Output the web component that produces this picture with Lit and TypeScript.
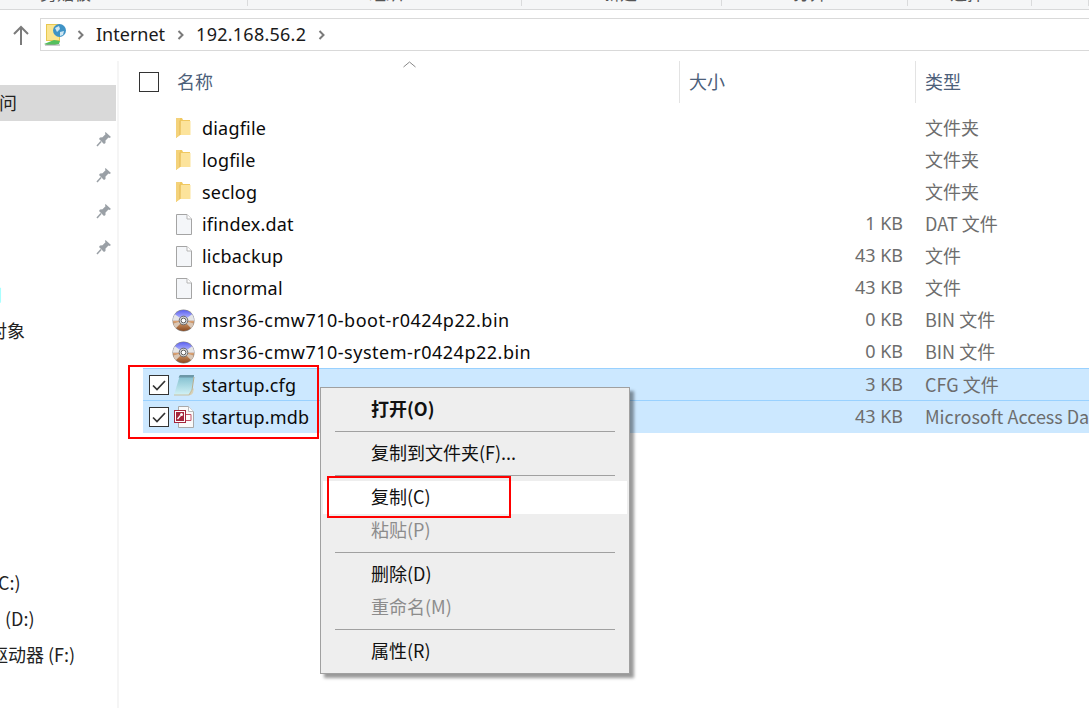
import { LitElement, html, css, svg } from "lit";
import { customElement } from "lit/decorators.js";

const folder = svg`<svg width="15" height="22" viewBox="0 0 15 22"><path d="M0 1h6l1 2h7v15H4l-4 3z" fill="#f0c860"/><path d="M0 1h4v17l-4 3z" fill="#f4d27a"/><path d="M4.500 4H14.500V18H4z" fill="#fce39b"/><path d="M4 3.500V18" stroke="#e4b850" fill="none"/></svg>`;
const doc = svg`<svg width="18" height="23" viewBox="0 0 18 23"><path d="M1.500 1.500h10.500l4.500 4.500v15.500h-15z" fill="#f4f6f9" stroke="#a4a4a4"/><path d="M12 1.500v4.500h4.500" fill="#fff" stroke="#b5b5b5"/></svg>`;
const disc = svg`<svg width="23" height="23" viewBox="0 0 24 24"><defs><linearGradient id="d1" x1="0" y1="0" x2="0" y2="1"><stop offset="0" stop-color="#5a5ff0"/><stop offset="1" stop-color="#c8ccff"/></linearGradient><linearGradient id="d2" x1="0" y1="0" x2="0" y2="1"><stop offset="0" stop-color="#e0a878"/><stop offset="1" stop-color="#8a4a20"/></linearGradient></defs><circle cx="12" cy="12" r="11.500" fill="#8a8a8a"/><path d="M1 12a11 11 0 0 1 22 0z" fill="url(#d1)"/><path d="M1 12a11 11 0 0 0 22 0z" fill="url(#d2)"/><path d="M12 12L3 5.500A11 11 0 0 0 1 12zM12 12L21 5.500A11 11 0 0 1 23 12z" fill="#e6e6e6"/><path d="M12 12L4 20A11 11 0 0 1 1.500 15zM12 12L20 20A11 11 0 0 0 22.500 15z" fill="#d9c7b6"/><circle cx="12" cy="12" r="4.500" fill="#ddd" stroke="#666"/><circle cx="12" cy="12" r="2.500" fill="#fff" stroke="#555"/></svg>`;
const cfg = svg`<svg width="22" height="22" viewBox="0 0 22 22"><defs><linearGradient id="c1" x1="0" y1="0" x2="0" y2="1"><stop offset="0" stop-color="#7dbccd"/><stop offset="1" stop-color="#d2f2f6"/></linearGradient></defs><path d="M7 1h14l-2 15-3 5H1z" fill="url(#c1)"/><path d="M7 1h14l-.5 2.500H5.500z" fill="#6d98a8"/><path d="M16 21l3-5 2-2-1 5-2 2z" fill="#d8d2b8"/><path d="M1 21h15l3-5" fill="none" stroke="#c7bfa2" stroke-width="1.200"/><path d="M21 3l-2 13" stroke="#b8ad8c"/></svg>`;
const mdb = svg`<svg width="20" height="22" viewBox="0 0 20 22"><path d="M4.500 .5h10l5 5v16h-15z" fill="#fafafa" stroke="#a9a9a9"/><path d="M14.500 .5v5h5" fill="#fff" stroke="#bbb"/><path d="M12 8.500h5v6h-5" fill="none" stroke="#c2556a"/><rect x=".5" y="4.500" width="11" height="12" fill="#fff" stroke="#a4263c"/><path d="M2 6h8v9H2z" fill="#a4263c"/><circle cx="7.500" cy="8.500" r="1.500" fill="#fff"/><path d="M6.500 9.500L3.500 13" stroke="#fff" stroke-width="1.300"/></svg>`;
const pin = svg`<svg width="16" height="16" viewBox="0 0 16 16"><path d="M9.500 1l5.500 5-1.500 1-1-.5L9.500 9.500 9.500 12 8 13 3 8l1-1.500 2.500-.2 3-3L9 2z" fill="#9aa0a6"/><path d="M5 10.500L1 15" stroke="#9aa0a6" stroke-width="1.500"/></svg>`;
const chev = svg`<svg width="8" height="10" viewBox="0 0 8 10"><path d="M1.500 1l4 4-4 4" fill="none" stroke="#7a7a7a" stroke-width="2"/></svg>`;
const netIcon = svg`<svg width="24" height="24" viewBox="0 0 24 24"><rect x="3.500" y="1.500" width="13" height="16" fill="#fbe591" stroke="#e8c850"/><path d="M1 21l10-4 6 1-1 3-4 1H4z" fill="#54c05c"/><path d="M2 22h15" stroke="#9aa0a0"/><circle cx="16.500" cy="7.500" r="6.500" fill="#3f93c6"/><path d="M12 5l4-2 1 3-3 3zM17 9l4-1-1 4-3 1z" fill="#cfe7f3"/></svg>`;
const check = svg`<svg width="14" height="14" viewBox="0 0 14 14"><path d="M1 7.500l4 4L13 3" fill="none" stroke="#333" stroke-width="1.700"/></svg>`;

type Row = { n: string; s: string; t: string; i: unknown; sel?: boolean; long?: boolean };
const rows: Row[] = [
  { n: "diagfile", s: "", t: "文件夹", i: folder },
  { n: "logfile", s: "", t: "文件夹", i: folder },
  { n: "seclog", s: "", t: "文件夹", i: folder },
  { n: "ifindex.dat", s: "1 KB", t: "DAT 文件", i: doc },
  { n: "licbackup", s: "43 KB", t: "文件", i: doc },
  { n: "licnormal", s: "43 KB", t: "文件", i: doc },
  { n: "msr36-cmw710-boot-r0424p22.bin", s: "0 KB", t: "BIN 文件", i: disc, long: true },
  { n: "msr36-cmw710-system-r0424p22.bin", s: "0 KB", t: "BIN 文件", i: disc, long: true },
  { n: "startup.cfg", s: "3 KB", t: "CFG 文件", i: cfg, sel: true },
  { n: "startup.mdb", s: "43 KB", t: "Microsoft Access Database", i: mdb, sel: true },
];

const groups = [
  { w: 248, p: 40, t: "剪贴板" },
  { w: 274, p: 121, t: "组织" },
  { w: 200, p: 81, t: "新建" },
  { w: 186, p: 71, t: "打开" },
  { w: 124, p: 42, t: "选择" },
  { w: 57, p: 0, t: "" },
];

@customElement("app-root")
export class AppRoot extends LitElement {
  static styles = css`
    :host { display: block; position: relative; width: 1089px; height: 708px; overflow: hidden; background: #fff;
      font-family: "Noto Sans CJK SC", "Noto Sans", sans-serif; font-size: 18px; color: #000; }
    .ribbon { height: 10px; box-sizing: border-box; background: #f5f6f7; border-bottom: 1px solid #d8d9da; overflow: hidden; display: flex; }
    .group { height: 6px; box-sizing: border-box; border-right: 1px solid #dadbdc; flex: none; overflow: visible; }
    .rt { display: block; font-size: 17px; color: #555; line-height: 18px; margin-top: -16px; white-space: nowrap; }
    .addr { height: 41px; display: flex; align-items: flex-end; }
    .up { width: 40px; height: 33px; flex: none; display: flex; justify-content: center; align-items: center; padding-left: 2px; box-sizing: border-box; }
    .box { flex: 1; height: 33px; border: 1px solid #d9d9d9; border-right: none; display: flex; align-items: center; box-sizing: border-box; font-family: "Noto Sans", sans-serif; font-size: 18px; color: #1a1a1a; padding-left: 2px; }
    .box svg { flex: none; }
    .first-chev { margin-left: 10px; display: flex; }
    .crumb { margin: 0 12px 2px 11px; }
    .crumb.ip { letter-spacing: .25px; }
    .body { display: flex; height: 657px; }
    .side { width: 119px; box-sizing: border-box; border-right: 2px solid #f5f5f5; margin-top: 10px; flex: none; display: flex; flex-direction: column; overflow: hidden; }
    .si { height: 36px; display: flex; align-items: center; justify-content: flex-end; padding-right: 1px; flex: none; width: 113px; box-sizing: border-box; }
    .si.sel { background: #d9d9d9; width: 116px; padding: 0 0 2px; margin-top: 24px; justify-content: flex-start; color: #222; }
    .clip { white-space: nowrap; line-height: 20px; }
    .si.txt { justify-content: flex-start; padding: 0 0 2px; color: #222; }
    .si.net { margin-top: 12px; }
    .spacer { height: 216px; flex: none; }
    .m-wen { margin-left: -1px; }
    .m-net { margin-left: -16px; color: #9ff; }
    .m-obj { margin-left: -11px; }
    .m-c { margin-left: -2px; }
    .m-d { margin-left: 5px; }
    .m-f { margin-left: -10px; }
    .main { flex: 1; min-width: 0; padding-left: 24px; }
    .head { height: 51px; display: flex; align-items: flex-start; margin: 10px 0 0 -4px; color: #4c607a; position: relative; }
    .hc { height: 42px; display: flex; align-items: center; box-sizing: border-box; flex: none; }
    .cb { width: 20px; height: 20px; border: 1px solid #333; box-sizing: border-box; background: #fff; display: flex; align-items: center; justify-content: center; flex: none; }
    .hcb { width: 20px; }
    .hname { width: 520px; padding: 0 0 3px 18px; }
    .hsize { width: 236px; border-left: 1px solid #e3e3e3; padding: 0 0 3px 9px; }
    .htype { flex: 1; border-left: 1px solid #e3e3e3; padding: 0 0 3px 9px; }
    .sort { position: absolute; left: 264px; top: 0; }
    .row { height: 32px; display: flex; align-items: center; white-space: nowrap; box-sizing: border-box; }
    .row.sel { background: #cce8ff; }
    .row.first { border-top: 1px solid #99d1ff; border-bottom: 1px solid #99d1ff; height: 33px; }
    .cell-cb { width: 29px; padding-left: 6px; box-sizing: border-box; flex: none; display: flex; }
    .ic { width: 23px; flex: none; display: flex; justify-content: center; align-items: center; }
    .n { width: 487px; padding-left: 7px; box-sizing: border-box; flex: none; font-family: "Noto Sans", sans-serif; color: #0a0a0a; letter-spacing: .2px; }
    .n.long { letter-spacing: .5px; }
    .s { width: 221px; padding-bottom: 2px; text-align: right; flex: none; color: #6d6d6d; font-family: "Noto Sans", sans-serif; }
    .ty { margin-left: 22px; padding-bottom: 2px; color: #6d6d6d; overflow: hidden; flex: 1; }

    .menu { position: absolute; left: 320px; top: 387px; width: 310px; height: 287px; box-sizing: border-box; background: #eeeeee; border: 1px solid #a0a0a0; box-shadow: 4px 4px 3px rgba(0,0,0,.4); padding: 5px 2px 2px; display: flex; flex-direction: column; }
    .mi { height: 33px; box-sizing: border-box; display: flex; align-items: center; padding: 0 0 4px 48px; flex: none; color: #111; white-space: nowrap; }
    .mi.b { font-weight: 700; }
    .mi.d { color: #8c8c8c; }
    .mi.h { background: #fff; }
    .sep { height: 1px; background: #a0a0a0; margin: 5px 12px; flex: none; }
    .red { position: absolute; border: 2px solid #f00; box-sizing: border-box; pointer-events: none; }
    .r1 { left: 128px; top: 365px; width: 191px; height: 74px; }
    .r2 { left: 327px; top: 476px; width: 184px; height: 42px; }
  `;

  render() {
    return html`
      <div class="ribbon">
        ${groups.map((g) => html`<div class="group" style="width:${g.w}px;padding-left:${g.p}px"><span class="rt">${g.t}</span></div>`)}
      </div>
      <div class="addr">
        <div class="up"><svg width="16" height="20" viewBox="0 0 16 20"><path d="M8 20V2M1 9l7-7 7 7" fill="none" stroke="#7b7b7b" stroke-width="2"/></svg></div>
        <div class="box">
          ${netIcon}
          <span class="first-chev">${chev}</span>
          <span class="crumb">Internet</span>${chev}
          <span class="crumb ip">192.168.56.2</span>${chev}
        </div>
      </div>
      <div class="body">
        <div class="side">
          <div class="si sel"><span class="clip m-wen">问</span></div>
          <div class="si">${pin}</div>
          <div class="si">${pin}</div>
          <div class="si">${pin}</div>
          <div class="si">${pin}</div>
          <div class="si txt net"><span class="clip m-net">网</span></div>
          <div class="si txt"><span class="clip m-obj">对象</span></div>
          <div class="spacer"></div>
          <div class="si txt"><span class="clip m-c">C:)</span></div>
          <div class="si txt"><span class="clip m-d">(D:)</span></div>
          <div class="si txt"><span class="clip m-f">驱动器 (F:)</span></div>
        </div>
        <div class="main">
          <div class="head">
            <div class="hc hcb"><div class="cb"></div></div>
            <div class="hc hname">名称</div>
            <div class="hc hsize">大小</div>
            <div class="hc htype">类型</div>
            <svg class="sort" width="13" height="7" viewBox="0 0 13 7"><path d="M.5 6L6.500 1l6 5" fill="none" stroke="#888"/></svg>
          </div>
          ${rows.map((r) => html`
            <div class="row ${r.sel ? "sel" : ""} ${r.n === "startup.cfg" ? "first" : ""}">
              <div class="cell-cb">${r.sel ? html`<div class="cb">${check}</div>` : ""}</div>
              <div class="ic">${r.i}</div>
              <div class="n ${r.long ? "long" : ""}">${r.n}</div>
              <div class="s">${r.s}</div>
              <div class="ty">${r.t}</div>
            </div>`)}
        </div>
      </div>
      <div class="menu">
        <div class="mi b">打开(O)</div>
        <div class="sep"></div>
        <div class="mi">复制到文件夹(F)...</div>
        <div class="sep"></div>
        <div class="mi h">复制(C)</div>
        <div class="mi d">粘贴(P)</div>
        <div class="sep"></div>
        <div class="mi">删除(D)</div>
        <div class="mi d">重命名(M)</div>
        <div class="sep"></div>
        <div class="mi">属性(R)</div>
      </div>
      <div class="red r1"></div>
      <div class="red r2"></div>
    `;
  }
}
